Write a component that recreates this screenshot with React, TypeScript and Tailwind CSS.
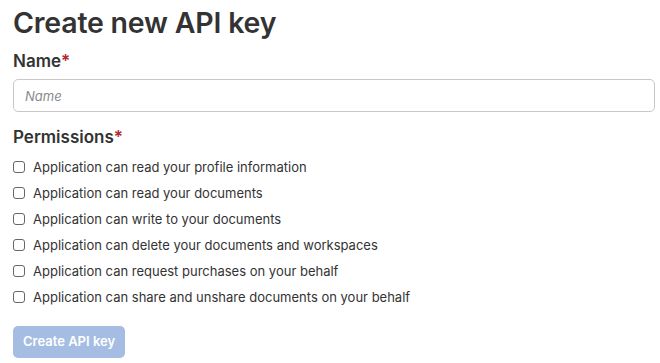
import React from "react";

const perms = [
  "Application can read your profile information",
  "Application can read your documents",
  "Application can write to your documents",
  "Application can delete your documents and workspaces",
  "Application can request purchases on your behalf",
  "Application can share and unshare documents on your behalf",
];

export default function App() {
  return (
    <div className="w-[660px] h-[363px] bg-white px-[13px] pt-[3px] text-[#333333] overflow-hidden" style={{ fontFamily: "Inter, 'Noto Sans', sans-serif" }}>
      <h1 className="text-[28.5px] leading-[40px] font-semibold tracking-[-0.2px]">Create new API key</h1>
      <div className="mt-[6px] text-[17px] leading-[24px] font-semibold">
        Name<span className="text-[#b3262d]">*</span>
      </div>
      <input
        className="mt-[6px] w-[642px] h-[33px] rounded-[5px] border border-[#c8c8c8] px-[11px] text-[13px] italic placeholder:text-[#8a8a8a] outline-none"
        placeholder="Name"
      />
      <div className="mt-[13px] text-[17px] leading-[24px] font-semibold">
        Permissions<span className="text-[#b3262d]">*</span>
      </div>
      <div className="mt-[6px] flex flex-col">
        {perms.map((p) => (
          <label key={p} className="flex items-center h-[26px] text-[13px] text-[#333333]">
            <span className="w-[12px] h-[12px] rounded-[3px] border border-[#666666] mr-[8px] shrink-0 -mt-[2px]" />
            {p}
          </label>
        ))}
      </div>
      <button className="mt-[15px] h-[32px] px-[10px] rounded-[5px] bg-[#a5bde3] text-white text-[13px] font-semibold">
        Create API key
      </button>
    </div>
  );
}
